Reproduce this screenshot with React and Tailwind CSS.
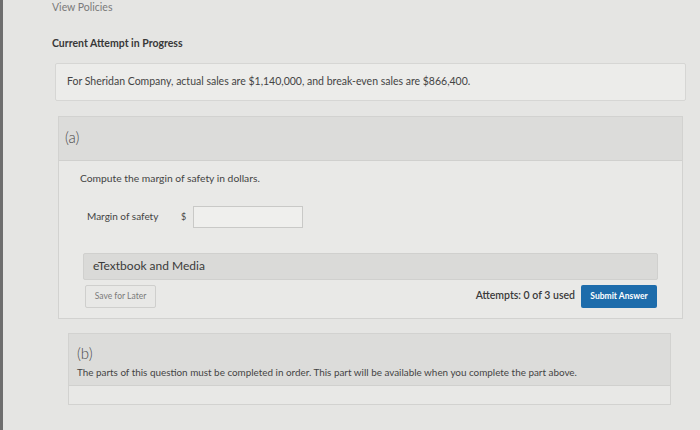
export default function App() {
  return (
    <div className="w-[700px] h-[430px] overflow-hidden bg-[#e5e5e3] border-l-[3px] border-[#6e6e6e] font-['Lato','Noto_Sans',sans-serif] text-[#444444]">
      <div className="pl-[49px] pr-[14px]">
        <p className="text-[10.5px] text-[#7a7a7a] leading-[12px] pt-[1px]">View Policies</p>

        <p className="mt-[25px] text-[10.5px] font-bold text-[#383838] leading-none">Current Attempt in Progress</p>

        <div className="mt-[14px] ml-[3px] w-[631px] h-[38px] flex items-center px-[11px] bg-[#ececea] border border-[#d6d6d4] rounded-[2px]">
          <p className="text-[10.5px]">For Sheridan Company, actual sales are $1,140,000, and break-even sales are $866,400.</p>
        </div>

        {/* part (a) */}
        <div className="mt-[15px] ml-[6px] w-[625px] border border-[#d2d2d0] bg-[#e9e9e7]">
          <div className="h-[44px] bg-[#dcdcda] border-b border-[#d0d0ce] px-[6px] pt-[8px]">
            <span className="text-[15px] font-light text-[#4a4a4a]">(a)</span>
          </div>
          <div className="pl-[21px] pr-[24px] pt-[10px] pb-[10px]">
            <p className="text-[10.3px] leading-[14px]">Compute the margin of safety in dollars.</p>
            <div className="mt-[21px] ml-[7px] flex items-center h-[22px]">
              <span className="text-[10px] w-[94px]">Margin of safety</span>
              <span className="text-[9px] w-[12px]">$</span>
              <div className="w-[110px] h-[22px] bg-[#efefed] border border-[#c9c9c7]"></div>
            </div>
            <div className="mt-[25px] ml-[3px] w-[575px] h-[27px] flex items-center px-[9px] bg-[#dadad8] border border-[#d0d0ce] rounded-[2px]">
              <span className="text-[12px] text-[#3a3a3a]">eTextbook and Media</span>
            </div>
            <div className="mt-[5px] ml-[5px] w-[572px] flex items-center justify-between">
              <div className="w-[71px] h-[23px] flex items-center justify-center border border-[#cfcfcd] bg-[#e8e8e6] rounded-[2px]">
                <span className="text-[8.5px] text-[#7a7a7a]">Save for Later</span>
              </div>
              <div className="flex items-center gap-[6px]">
                <span className="text-[10.5px] font-semibold text-[#3a3a3a]">Attempts: 0 of 3 used</span>
                <div className="w-[76px] h-[23px] flex items-center justify-center bg-[#1d6cab] rounded-[2px]">
                  <span className="text-[8.5px] font-bold text-white">Submit Answer</span>
                </div>
              </div>
            </div>
          </div>
        </div>

        {/* part (b) */}
        <div className="mt-[14px] ml-[16px] w-[603px] border border-[#d2d2d0] bg-[#dcdcda]">
          <div className="px-[8px] pt-[10px] pb-[7px] border-b border-[#d0d0ce]">
            <p className="text-[15px] font-light text-[#4a4a4a] leading-[18px]">(b)</p>
            <p className="mt-[4px] text-[9.9px] leading-[12px]">The parts of this question must be completed in order. This part will be available when you complete the part above.</p>
          </div>
          <div className="h-[18px] bg-[#e8e8e6]"></div>
        </div>
      </div>
    </div>
  );
}
